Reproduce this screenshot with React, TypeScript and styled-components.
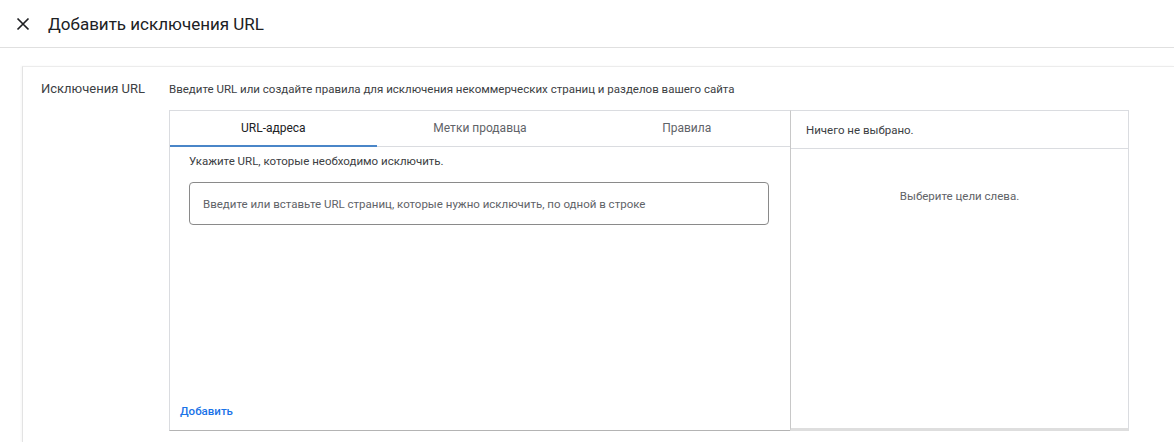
import React, { useState } from 'react';
import styled, { createGlobalStyle } from 'styled-components';

const GlobalStyle = createGlobalStyle`
  html, body {
    margin: 0;
    padding: 0;
    background: #ffffff;
    font-family: Roboto, "Noto Sans", Arial, sans-serif;
    color: #202124;
    overflow: hidden;
  }
`;

const Page = styled.div`
  width: 1174px;
  height: 442px;
  display: flex;
  flex-direction: column;
  background: #fff;
`;

const TopBar = styled.header`
  height: 48px;
  box-sizing: border-box;
  border-bottom: 1px solid #e0e0e0;
  display: flex;
  align-items: center;
  padding-left: 13px;
  gap: 15px;
`;

const CloseButton = styled.button`
  width: 20px;
  height: 20px;
  padding: 0;
  border: none;
  background: transparent;
  display: flex;
  align-items: center;
  justify-content: center;
  cursor: pointer;
`;

const Title = styled.h1`
  margin: 0;
  font-size: 17px;
  font-weight: 400;
  color: #202124;
`;

const Main = styled.main`
  flex: 1;
  padding: 18px 0 0 22px;
  display: flex;
`;

const Card = styled.section`
  flex: 1;
  display: flex;
  background: #fff;
  border-top: 1px solid #ececec;
  border-left: 1px solid #e3e3e3;
  box-shadow: -1px 0 2px rgba(0, 0, 0, 0.04);
  padding-top: 14px;
`;

const FieldLabel = styled.div`
  width: 128px;
  padding-left: 18px;
  font-size: 13px;
  color: #3c4043;
  line-height: 16px;
`;

const FieldBody = styled.div`
  display: flex;
  flex-direction: column;
`;

const Hint = styled.p`
  margin: 0 0 13px 0;
  font-size: 11.5px;
  line-height: 16px;
  color: #3c4043;
`;

const Panels = styled.div`
  display: flex;
  height: 321px;
`;

const LeftPanel = styled.div`
  width: 621px;
  box-sizing: border-box;
  border: 1px solid #dadce0;
  border-bottom: 1px solid #b4b4b4;
  border-right: none;
  display: flex;
  flex-direction: column;
`;

const Tabs = styled.div`
  display: grid;
  grid-template-columns: repeat(3, 1fr);
  height: 35px;
  border-bottom: 1px solid #dadce0;
`;

const Tab = styled.button<{ $active?: boolean }>`
  border: none;
  background: transparent;
  font-family: inherit;
  font-size: 12px;
  color: ${({ $active }) => ($active ? '#202124' : '#5f6368')};
  border-bottom: 2px solid ${({ $active }) => ($active ? '#4a86c8' : 'transparent')};
  margin-bottom: -1px;
  padding: 0;
  cursor: pointer;
`;

const TabBody = styled.div`
  flex: 1;
  display: flex;
  flex-direction: column;
  padding: 7px 20px 0 19px;
`;

const Instruction = styled.div`
  font-size: 11.5px;
  color: #3c4043;
  line-height: 14px;
`;

const UrlInput = styled.input`
  margin-top: 14px;
  height: 43px;
  box-sizing: border-box;
  width: 580px;
  border: 1px solid #8a8a8a;
  border-radius: 4px;
  padding: 0 13px;
  font-family: inherit;
  font-size: 11.5px;
  color: #202124;
  outline: none;

  &::placeholder {
    color: #5f6368;
  }
`;

const AddLink = styled.button`
  margin-top: auto;
  margin-left: -9px;
  margin-bottom: 12px;
  align-self: flex-start;
  border: none;
  background: transparent;
  padding: 0;
  font-family: inherit;
  font-size: 11.5px;
  font-weight: 500;
  color: #1a73e8;
  cursor: pointer;
`;

const RightPanel = styled.div`
  width: 339px;
  box-sizing: border-box;
  border: 1px solid #dadce0;
  border-left: 1px solid #c8c8c8;
  border-bottom: 3px solid #dedede;
  display: flex;
  flex-direction: column;
`;

const SelectedHeader = styled.div`
  height: 38px;
  box-sizing: border-box;
  border-bottom: 1px solid #dadce0;
  display: flex;
  align-items: center;
  padding-left: 15px;
  font-size: 11.5px;
  color: #3c4043;
`;

const EmptyNote = styled.div`
  padding-top: 40px;
  text-align: center;
  font-size: 11.5px;
  color: #5f6368;
`;

const tabs = ['URL-адреса', 'Метки продавца', 'Правила'];

export default function App() {
  const [activeTab, setActiveTab] = useState(0);
  const [value, setValue] = useState('');

  return (
    <Page>
      <GlobalStyle />
      <TopBar>
        <CloseButton aria-label="Закрыть">
          <svg width="14" height="14" viewBox="0 0 14 14">
            <path d="M1.5 1.5 L12.5 12.5 M12.5 1.5 L1.5 12.5" stroke="#202124" strokeWidth="1.7" />
          </svg>
        </CloseButton>
        <Title>Добавить исключения URL</Title>
      </TopBar>
      <Main>
        <Card>
          <FieldLabel>Исключения URL</FieldLabel>
          <FieldBody>
            <Hint>Введите URL или создайте правила для исключения некоммерческих страниц и разделов вашего сайта</Hint>
            <Panels>
              <LeftPanel>
                <Tabs>
                  {tabs.map((t, i) => (
                    <Tab key={t} $active={i === activeTab} onClick={() => setActiveTab(i)}>
                      {t}
                    </Tab>
                  ))}
                </Tabs>
                <TabBody>
                  <Instruction>Укажите URL, которые необходимо исключить.</Instruction>
                  <UrlInput
                    value={value}
                    onChange={(e) => setValue(e.target.value)}
                    placeholder="Введите или вставьте URL страниц, которые нужно исключить, по одной в строке"
                  />
                  <AddLink>Добавить</AddLink>
                </TabBody>
              </LeftPanel>
              <RightPanel>
                <SelectedHeader>Ничего не выбрано.</SelectedHeader>
                <EmptyNote>Выберите цели слева.</EmptyNote>
              </RightPanel>
            </Panels>
          </FieldBody>
        </Card>
      </Main>
    </Page>
  );
}
